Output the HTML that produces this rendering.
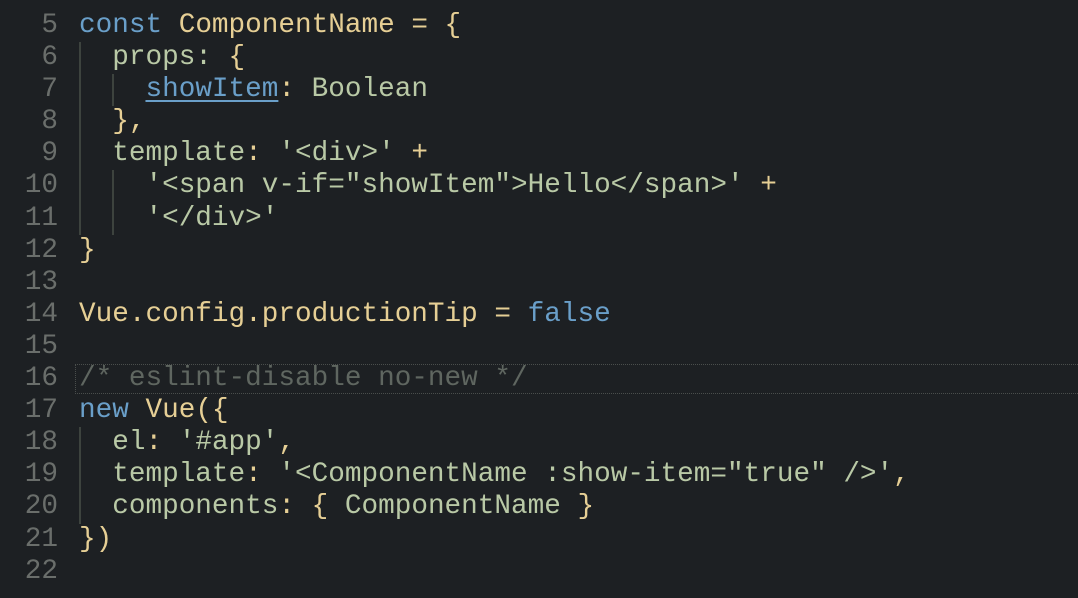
<!DOCTYPE html>
<html><head><style>
html,body{margin:0;padding:0;background:#1d2023;width:1078px;height:598px;overflow:hidden}
.c{position:absolute;left:0;top:10px;width:1078px;font-family:"Liberation Mono",monospace;font-size:27.7px;line-height:32.1px;color:#b9c9a6}
.l{position:relative;height:32.1px;white-space:pre}
.n{display:inline-block;width:58px;text-align:right;color:#6a6e6b;margin-right:21px}
.k{color:#6a9fc9}.y{color:#e6cf95}.g{color:#b9c9a6}.cm{color:#5f6660}
.u{color:#6a9fc9;text-decoration:underline;text-decoration-thickness:2px;text-underline-offset:4px}
.gd{position:absolute;top:0;width:2px;height:32.1px;background:#3d433e}
.hl{position:absolute;left:75px;right:0;top:1px;height:30px;border:1px dotted #4a4e4c;border-right:none;box-sizing:border-box}
</style></head><body><div class="c"><div class="l"><span class="n">5</span><span class="k">const</span> <span class="y">ComponentName = {</span></div><div class="l"><i class="gd" style="left:79px"></i><span class="n">6</span>  props: <span class="y">{</span></div><div class="l"><i class="gd" style="left:79px"></i><i class="gd" style="left:112px"></i><span class="n">7</span>    <span class="u">showItem</span><span class="y">:</span> Boolean</div><div class="l"><i class="gd" style="left:79px"></i><span class="n">8</span>  <span class="y">},</span></div><div class="l"><i class="gd" style="left:79px"></i><span class="n">9</span>  template<span class="y">:</span> '&lt;div&gt;' <span class="y">+</span></div><div class="l"><i class="gd" style="left:79px"></i><i class="gd" style="left:112px"></i><span class="n">10</span>    '&lt;span v-if="showItem"&gt;Hello&lt;/span&gt;' <span class="y">+</span></div><div class="l"><i class="gd" style="left:79px"></i><i class="gd" style="left:112px"></i><span class="n">11</span>    '&lt;/div&gt;'</div><div class="l"><span class="n">12</span><span class="y">}</span></div><div class="l"><span class="n">13</span></div><div class="l"><span class="n">14</span><span class="y">Vue.config.productionTip =</span> <span class="k">false</span></div><div class="l"><span class="n">15</span></div><div class="l"><i class="hl"></i><span class="n">16</span><span class="cm">/* eslint-disable no-new */</span></div><div class="l"><span class="n">17</span><span class="k">new</span> <span class="y">Vue({</span></div><div class="l"><i class="gd" style="left:79px"></i><span class="n">18</span>  el<span class="y">:</span> '#app'<span class="y">,</span></div><div class="l"><i class="gd" style="left:79px"></i><span class="n">19</span>  template<span class="y">:</span> '&lt;ComponentName :show-item="true" /&gt;'<span class="y">,</span></div><div class="l"><i class="gd" style="left:79px"></i><span class="n">20</span>  components<span class="y">: {</span> ComponentName <span class="y">}</span></div><div class="l"><span class="n">21</span><span class="y">})</span></div><div class="l"><span class="n">22</span></div></div></body></html>
